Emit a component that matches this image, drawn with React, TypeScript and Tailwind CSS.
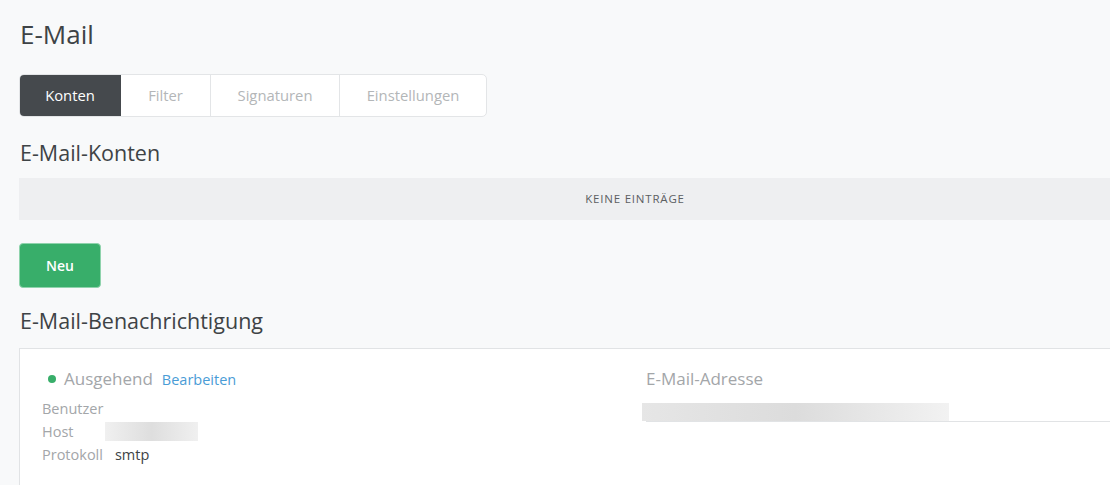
import React from "react";

export default function App() {
  return (
    <div
      className="w-[1110px] h-[485px] overflow-hidden bg-[#f8f9fa] text-[#3e4346]"
      style={{ fontFamily: '"Open Sans", "Noto Sans", sans-serif' }}
    >
      <div className="w-[1251px] pl-[19px] pt-[17px]">
        <h1 className="text-[26px] leading-[34px] pl-[1px]">E-Mail</h1>

        <div className="mt-[23px] inline-flex h-[43px] rounded-[5px] border border-[#e3e5e7] bg-white text-[14.8px] text-[#b3b6b8] overflow-hidden">
          <div className="w-[102px] flex items-center justify-center bg-[#45494d] text-white -m-px mr-0 rounded-l-[5px]">Konten</div>
          <div className="w-[90px] flex items-center justify-center border-r border-[#e3e5e7]">Filter</div>
          <div className="w-[129px] flex items-center justify-center border-r border-[#e3e5e7]">Signaturen</div>
          <div className="w-[146px] flex items-center justify-center">Einstellungen</div>
        </div>

        <h2 className="mt-[22px] text-[21.5px] leading-[28px] pl-[1px]">E-Mail-Konten</h2>

        <div className="mt-[11px] h-[42px] bg-[#eeeff1] flex items-center justify-center text-[11.5px] tracking-[0.8px] text-[#5c6063]">
          KEINE EINTRÄGE
        </div>

        <button className="mt-[23px] w-[82px] h-[45px] rounded-[4px] bg-[#38ae6a] text-white text-[14px] font-semibold border border-[#8fd3ac]">
          Neu
        </button>

        <h2 className="mt-[19px] text-[21.5px] leading-[28px] pl-[1px]">E-Mail-Benachrichtigung</h2>

        <div className="mt-[13px] h-[200px] bg-white border border-[#e1e3e5] flex pl-[22px] pt-[17px]">
          <div className="w-[600px]">
            <div className="flex items-center">
              <span className="w-[8px] h-[8px] rounded-full bg-[#38ae6a] ml-[6px] mr-[8px]" />
              <span className="text-[17px] text-[#a3a6a9]">Ausgehend</span>
              <span className="ml-[9px] text-[14.5px] text-[#4a9cd6] mt-[2px]">Bearbeiten</span>
            </div>
            <div className="mt-[5px] text-[14.5px] leading-[23px] text-[#a3a6a9]">
              <div>Benutzer</div>
              <div className="flex items-center">
                <span className="w-[63px]">Host</span>
                <span className="w-[93px] h-[19px] bg-gradient-to-r from-[#f0f0f0] via-[#dedede] to-[#f0f0f0]" />
              </div>
              <div className="flex">
                <span>Protokoll</span>
                <span className="ml-[12px] text-[#3e4346]">smtp</span>
              </div>
            </div>
          </div>
          <div className="flex-1">
            <div className="pl-[4px] text-[17px] text-[#a3a6a9]">E-Mail-Adresse</div>
            <div className="mt-[11px] w-[307px] h-[18px] bg-gradient-to-r from-[#e6e6e6] via-[#dcdcdc] to-[#f2f2f2]" />
            <div className="ml-[4px] h-px bg-[#e1e3e5]" />
          </div>
        </div>
      </div>
    </div>
  );
}
